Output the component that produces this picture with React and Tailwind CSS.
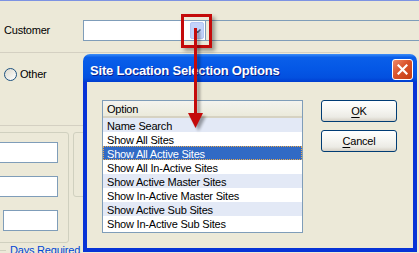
import React from "react";

const options = [
  "Name Search",
  "Show All Sites",
  "Show All Active Sites",
  "Show All In-Active Sites",
  "Show Active Master Sites",
  "Show In-Active Master Sites",
  "Show Active Sub Sites",
  "Show In-Active Sub Sites",
];

const selectedIndex = 2;

const XpButton = ({ hot, rest }) => (
  <button className="flex h-[22px] w-[76px] items-center justify-center rounded-[3px] border border-[#003c74] bg-[linear-gradient(to_bottom,#ffffff_0%,#f7f7f3_40%,#ecebe5_80%,#d6d0c5_100%)] text-[11px] text-black">
    <span>
      <span className="underline underline-offset-2">{hot}</span>
      {rest}
    </span>
  </button>
);

const TextBox = ({ className }) => (
  <div className={`h-[21px] border border-[#7f9db9] bg-white ${className}`} />
);

export default function App() {
  return (
    <div className="relative h-[253px] w-[419px] overflow-hidden border-t border-[#7d93e3] bg-[#ece9d8] font-['Liberation_Sans',Arial,sans-serif] text-[11px] leading-[13px] tracking-[-0.2px] text-black">
      {/* Customer row */}
      <div className="flex h-[51px] items-start pt-[19px]">
        <div className="flex h-[21px] w-full items-center">
          <span className="w-[83px] pl-[4px]">Customer</span>
          <div className="flex h-[21px] w-[123px] items-center justify-end border border-[#7f9db9] bg-white pr-px">
            <div className="flex h-[17px] w-[14px] items-center justify-center rounded-[2px] border border-[#b4c6f4] bg-[#c3d3fb]">
              <svg width="7" height="4" viewBox="0 0 7 4">
                <path d="M0.5 0.5 L3.5 3.5 L6.5 0.5" fill="none" stroke="#4d6185" strokeWidth="1.5" />
              </svg>
            </div>
          </div>
          <div className="h-[21px] flex-1 border-y border-[#7f9db9]" />
        </div>
      </div>
      <div className="h-px w-[340px] bg-[#d4d0c2]" />

      {/* Other row */}
      <div className="flex h-[72px] items-start pl-[4px] pt-[15px]">
        <label className="flex items-center gap-[3px]">
          <span className="h-[13px] w-[13px] rounded-full border border-[#1c5180] bg-[linear-gradient(135deg,#dcd9cd,#ffffff)]" />
          Other
        </label>
      </div>
      <div className="h-px w-[83px] bg-[#d4d0c2]" />

      {/* group boxes */}
      <div className="flex items-start gap-[4px] pt-[6px]">
        <div className="-ml-[4px] flex h-[111px] w-[73px] flex-col gap-[13px] rounded-[3px] border border-[#d0d0bf] pt-[9px]">
          <TextBox className="ml-px w-[60px]" />
          <TextBox className="ml-px w-[60px]" />
          <TextBox className="ml-[6px] w-[55px]" />
        </div>
        <div className="h-[65px] w-[40px] rounded-[3px] border border-[#d0d0bf]" />
      </div>
      <div className="flex items-center gap-[4px] pt-[1px]">
        <div className="h-px w-[6px] bg-[#d0d0bf]" />
        <span className="text-[#0046d5]">Days Required</span>
      </div>

      {/* dialog */}
      <div className="absolute left-[83px] top-[53px] flex h-[198px] w-[334px] flex-col overflow-hidden rounded-t-[7px]">
        <div className="flex h-[28px] shrink-0 items-start justify-between bg-[linear-gradient(to_bottom,#3d8ef8_0%,#0a5fe9_12%,#0558e6_50%,#0350df_85%,#003dcf_100%)] pl-[7px] pr-[4px] pt-[5px]">
          <span className="mt-[4px] text-[13px] font-bold leading-[16px] text-white [text-shadow:1px_1px_0_#0a1e8a]">
            Site Location Selection Options
          </span>
          <div className="flex h-[21px] w-[21px] items-center justify-center rounded-[3px] border border-white bg-[linear-gradient(135deg,#ef8a6a_0%,#d9532c_45%,#c43c12_100%)]">
            <svg width="11" height="11" viewBox="0 0 11 11">
              <path d="M1.5 1.5 L9.5 9.5 M9.5 1.5 L1.5 9.5" stroke="#ffffff" strokeWidth="2.2" strokeLinecap="square" />
            </svg>
          </div>
        </div>
        <div className="flex flex-1 items-start gap-[18px] border-x-4 border-b-4 border-[#0733d6] bg-[#ece9d8] pl-[15px] pt-[18px]">
          <div className="flex h-[133px] w-[201px] flex-col border border-[#7f9db9] bg-white">
            <div className="h-[17px] shrink-0 border-b-2 border-[#d6d2c2] bg-[linear-gradient(to_bottom,#f4f3ee,#ebeadb)] pl-[4px] pt-[2px] leading-[13px]">
              Option
            </div>
            {options.map((opt, i) => (
              <div
                key={opt}
                className={
                  i === selectedIndex
                    ? "h-[14px] shrink-0 whitespace-nowrap bg-[#316ac5] pl-[4px] leading-[16px] text-white outline-1 -outline-offset-1 outline-dotted outline-[#e8a94c]"
                    : i % 2 === 0
                    ? "h-[14px] shrink-0 whitespace-nowrap bg-[#e3e9f6] pl-[4px] leading-[16px]"
                    : "h-[14px] shrink-0 whitespace-nowrap bg-white pl-[4px] leading-[16px]"
                }
              >
                {opt}
              </div>
            ))}
          </div>
          <div className="flex flex-col gap-[8px]">
            <XpButton hot="O" rest="K" />
            <XpButton hot="C" rest="ancel" />
          </div>
        </div>
      </div>

      {/* red annotation */}
      <div className="absolute left-[181px] top-[13px] h-[34px] w-[31px] border-[3px] border-[#c40a0a] shadow-[3px_3px_4px_rgba(0,0,0,0.35)]" />
      <svg className="absolute left-[184px] top-[27px]" width="30" height="108" viewBox="0 0 30 108">
        <defs>
          <filter id="arrowShadow" x="-50%" y="-10%" width="200%" height="130%">
            <feGaussianBlur stdDeviation="1.6" />
          </filter>
        </defs>
        <g transform="translate(3 3)" fill="#000000" opacity="0.35" filter="url(#arrowShadow)">
          <rect x="10" y="0" width="3" height="87" />
          <polygon points="4,85 19,85 11.5,100" />
        </g>
        <g fill="#c40a0a">
          <rect x="10" y="0" width="3" height="87" />
          <polygon points="4,85 19,85 11.5,100" />
        </g>
      </svg>
    </div>
  );
}
